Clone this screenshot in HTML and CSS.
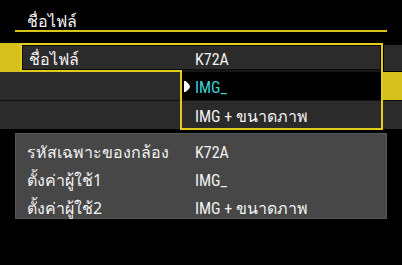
FILE: index.html
```html
<!DOCTYPE html>
<html lang="th">
<head>
    <meta charset="UTF-8">
    <meta name="viewport" content="width=device-width, initial-scale=1.0">
    <title>ชื่อไฟล์</title>
    <link rel="stylesheet" href="styles.css">
</head>
<body>
    <div class="screen">
        <div class="title">ชื่อไฟล์</div>

        <div class="menu">
            <div class="row row-sel">
                <div class="marker"></div>
                <div class="field">
                    <div class="field-inner">
                        <span class="label">ชื่อไฟล์</span>
                        <span class="value">K72A</span>
                    </div>
                </div>
                <div class="tail"></div>
            </div>
            <div class="row row-plain">
                <div class="row-fill"></div>
                <div class="marker-right"></div>
            </div>
            <div class="row row-plain row-last">
                <div class="row-fill"></div>
            </div>

            <!-- dropdown opened over the rows -->
            <div class="popup">
                <div class="option option-active">
                    <svg class="pointer" width="6" height="11" viewBox="0 0 6 11">
                        <path d="M0 0 L1.5 0 Q6 3.5 6 5.5 Q6 7.5 1.5 11 L0 11 Z" fill="#fff"/>
                    </svg>
                    <span class="value">IMG_</span>
                </div>
                <div class="option"><span class="value">IMG + ขนาดภาพ</span></div>
            </div>
        </div>

        <div class="info">
            <div class="info-row">
                <span class="label">รหัสเฉพาะของกล้อง</span>
                <span class="value">K72A</span>
            </div>
            <div class="info-row">
                <span class="label">ตั้งค่าผู้ใช้1</span>
                <span class="value">IMG_</span>
            </div>
            <div class="info-row">
                <span class="label">ตั้งค่าผู้ใช้2</span>
                <span class="value">IMG + ขนาดภาพ</span>
            </div>
        </div>
    </div>
</body>
</html>
```

FILE: styles.css
```css
body {
    margin: 0;
    padding: 0;
    background-color: #000;
    color: #f2f2f2;
    font-family: "Noto Sans", sans-serif;
    font-size: 16px;
}
.screen {
    width: 402px;
    height: 265px;
    overflow: hidden;
}
.value {
    font-family: "Roboto Condensed", "DejaVu Sans Condensed", "Noto Sans", sans-serif;
    font-stretch: 75%;
}
.title {
    margin: 0 15px;
    height: 32px;
    padding-left: 12px;
    line-height: 42px;
    box-sizing: border-box;
    border-bottom: 2px solid #d9c41c;
    overflow: hidden;
}
.menu {
    position: relative;
    margin-top: 11px;
}
.row {
    display: flex;
    height: 28px;
}
.row-sel {
    height: 29px;
}
.marker {
    width: 20px;
    background-color: #d6c01c;
}
.field {
    width: 363px;
    border: 2px solid #e2cd1e;
    box-sizing: border-box;
}
.field-inner {
    display: flex;
    align-items: center;
    height: 100%;
    border: 1px solid #0c0c0c;
    box-sizing: border-box;
    background-color: #2b2b2b;
    padding: 3px 0 0 6px;
}
.field-inner .label {
    width: 166px;
}
.tail {
    flex: 1;
    margin: 2px 0 1px 1px;
    background-color: #2b2b2b;
}
.row-plain {
    border-bottom: 1px solid #111;
}
.row-last {
    border-bottom: none;
}
.row-fill {
    flex: 1;
    background-color: #2b2b2b;
}
.marker-right {
    width: 19px;
    background-color: #d6c01c;
}
.popup {
    position: absolute;
    left: 180px;
    top: 27px;
    width: 203px;
    box-sizing: border-box;
    border: 2px solid #e2cd1e;
    border-top: none;
}
.option {
    display: flex;
    align-items: center;
    height: 28px;
    padding: 3px 0 0 13px;
    box-sizing: border-box;
    background-color: #2b2b2b;
    border-top: 1px solid #111;
}
.option-active {
    height: 30px;
    padding-left: 2px;
    background-color: #000;
    color: #3fd3d6;
    border-top: 2px solid #161616;
}
.pointer {
    margin: -3px 5px 0 0;
}
.info {
    margin: 4px 15px 0;
    height: 86px;
    padding-top: 4px;
    box-sizing: border-box;
    background-color: #474747;
    border: 1px solid #555;
}
.info-row {
    display: flex;
    align-items: center;
    height: 28px;
    padding-left: 11px;
}
.info-row .label {
    width: 168px;
}
```
